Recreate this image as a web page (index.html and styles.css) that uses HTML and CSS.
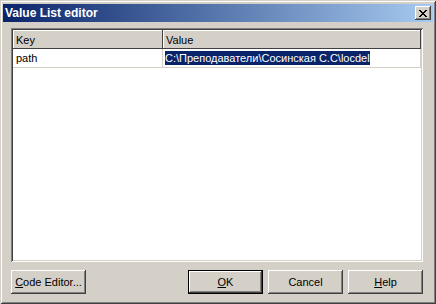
FILE: index.html
```html
<!DOCTYPE html>
<html lang="ru">
<head>
    <meta charset="UTF-8">
    <title>Value List editor</title>
    <link rel="stylesheet" href="styles.css">
</head>
<body>

    <div class="window">
        <div class="titlebar">
            <span class="title">Value List editor</span>
            <button class="close">
                <svg width="8" height="7" viewBox="0 0 8 7">
                    <path d="M0 0h2v1h1v1h2v-1h1v-1h2v1h-1v1h-1v1h-1v1h1v1h1v1h1v1h-2v-1h-1v-1h-2v1h-1v1h-2v-1h1v-1h1v-1h1v-1h-1v-1h-1v-1h-1z" fill="#000"/>
                </svg>
            </button>
        </div>

        <div class="client">
            <div class="grid">
                <div class="row head">
                    <div class="cell key">Key</div>
                    <div class="cell value">Value</div>
                </div>
                <div class="row">
                    <div class="cell key">path</div>
                    <div class="cell value"><span class="sel">C:\Преподаватели\Сосинская С.С\locdel</span></div>
                </div>
            </div>

            <div class="buttons">
                <button class="btn"><u>C</u>ode Editor...</button>
                <div class="group">
                    <button class="btn default"><u>O</u>K</button>
                    <button class="btn">Cancel</button>
                    <button class="btn"><u>H</u>elp</button>
                </div>
            </div>
        </div>
    </div>

</body>
</html>
```

FILE: styles.css
```css
body {
    margin: 0;
    padding: 0;
    font-family: 'Liberation Sans', Arial, sans-serif;
    font-size: 11px;
    background-color: #d4d0c8;
}

.window {
    width: 436px;
    height: 304px;
    box-sizing: border-box;
    padding: 4px 3px 3px 3px;
    display: flex;
    flex-direction: column;
    background-color: #d4d0c8;
    box-shadow: inset 1px 1px #d4d0c8, inset -1px -1px #404040,
                inset 2px 2px #ffffff, inset -2px -2px #808080;
}

/* title bar */
.titlebar {
    height: 18px;
    display: flex;
    align-items: center;
    justify-content: space-between;
    padding: 0 2px 0 2px;
    background: linear-gradient(to right, #0a246a, #a6caf0);
}

.title {
    color: #fff;
    font-weight: bold;
    font-size: 12px;
}

.close {
    width: 16px;
    height: 14px;
    padding: 0;
    border: 0;
    display: flex;
    align-items: center;
    justify-content: center;
    background-color: #d4d0c8;
    box-shadow: inset -1px -1px #404040, inset 1px 1px #ffffff,
                inset -2px -2px #808080, inset 2px 2px #d4d0c8;
}

/* client area */
.client {
    flex: 1;
    display: flex;
    flex-direction: column;
    padding: 6px 10px 6px 8px;
}

.grid {
    flex: 1;
    background-color: #fff;
    padding: 2px 2px 2px 2px;
    box-shadow: inset 1px 1px #808080, inset -1px -1px #ffffff,
                inset 2px 2px #404040, inset -2px -2px #d4d0c8;
}

.row {
    display: flex;
    height: 19px;
}

.cell {
    box-sizing: border-box;
    display: flex;
    align-items: center;
    padding-left: 3px;
    color: #000;
}

.key {
    width: 150px;
}

.value {
    flex: 1;
}

.head .cell {
    background-color: #d4d0c8;
    box-shadow: inset -1px -1px #404040, inset 1px 1px #ffffff;
}

.row:not(.head) .cell {
    border-right: 1px solid #d4d0c8;
    border-bottom: 1px solid #d4d0c8;
}

.sel {
    background-color: #0a246a;
    color: #fff;
    padding: 1px 0;
    margin-left: -1px;
}

/* buttons */
.buttons {
    display: flex;
    justify-content: space-between;
    margin-top: 8px;
    margin-bottom: 1px;
}

.group {
    display: flex;
    gap: 5px;
}

.btn {
    width: 75px;
    height: 24px;
    padding: 0;
    border: 0;
    font-family: 'Liberation Sans', Arial, sans-serif;
    font-size: 11px;
    color: #000;
    background-color: #d4d0c8;
    box-shadow: inset -1px -1px #404040, inset 1px 1px #ffffff,
                inset -2px -2px #808080, inset 2px 2px #d4d0c8;
}

.btn.default {
    box-shadow: inset 0 0 0 1px #000, inset -2px -2px #404040,
                inset 2px 2px #ffffff, inset -3px -3px #808080;
}
```
